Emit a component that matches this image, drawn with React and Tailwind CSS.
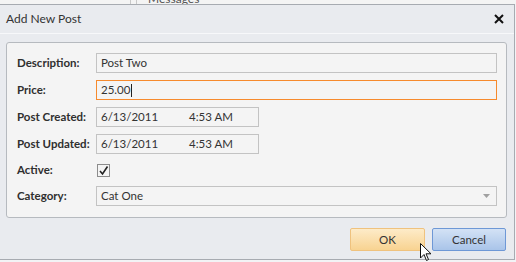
import React from "react";

const labelCls = "w-[79px] shrink-0 font-bold text-[11.5px] text-[#2f2f2f]";
const boxCls = "h-[20px] border border-[#c3c3c3] bg-[#f4f4f4] flex items-center px-[4px] text-[11.5px] text-[#333]";

function Row({ label, children, h = "h-[20px]" }) {
  return (
    <div className={`flex items-center ${h}`}>
      <div className={labelCls}>{label}</div>
      <div className="flex-1 flex items-center">{children}</div>
    </div>
  );
}

function DateBox() {
  return (
    <div className={`${boxCls} w-[163px]`}>
      <span className="w-[88px]">6/13/2011</span>
      <span>4:53 AM</span>
    </div>
  );
}

export default function App() {
  return (
    <div
      className="w-[516px] h-[262px] bg-[#f2f3f5] overflow-hidden relative"
      style={{ fontFamily: "Lato, 'Open Sans', sans-serif" }}
    >
      {/* strip of the page behind the dialog */}
      <div className="h-[4px] overflow-hidden flex bg-[#f4f4f4]">
        <div className="w-[130px]" />
        <div className="w-[7px] border-x border-[#c9c9c9]" />
        <div className="pl-[11px] -mt-[10px] text-[12px] text-[#555]">Messages</div>
      </div>

      <div className="w-[515px] h-[256px] border-y border-r border-[#a7abb1] bg-[#e9ebef] flex flex-col">
        {/* header */}
        <div className="h-[29px] flex items-center justify-between pl-[6px] pr-[10px] border-b border-[#f7f8fa]">
          <span className="text-[12px] text-[#333]">Add New Post</span>
          <svg width="10" height="10" viewBox="0 0 10 10">
            <path d="M1 1 L9 9 M9 1 L1 9" stroke="#111" strokeWidth="2" />
          </svg>
        </div>

        {/* form panel */}
        <div className="pl-[6px] pr-[7px] pt-[8px]">
          <div className="h-[176px] border border-[#b6babf] rounded-[3px] bg-[#f4f4f4] pl-[10px] pr-[9px] pt-[10px] flex flex-col gap-[7px]">
            <Row label="Description:">
              <div className={`${boxCls} w-full`}>Post Two</div>
            </Row>
            <Row label="Price:">
              <div className={`${boxCls} w-full border-[#f68a2d]`}>
                25.00<span className="w-px h-[13px] bg-[#222] ml-px" />
              </div>
            </Row>
            <Row label="Post Created:">
              <DateBox />
            </Row>
            <Row label="Post Updated:">
              <DateBox />
            </Row>
            <Row label="Active:" h="h-[18px]">
              <div className="ml-[1px] w-[13px] h-[13px] border border-[#8c8c8c] bg-[#f4f4f4] flex items-center justify-center">
                <svg width="11" height="11" viewBox="0 0 11 11">
                  <path d="M2 6 L4.5 9 L9.5 1.5" stroke="#222" strokeWidth="1.6" fill="none" />
                </svg>
              </div>
            </Row>
            <Row label="Category:">
              <div className={`${boxCls} w-full justify-between text-[#3a3a4a]`}>
                <span>Cat One</span>
                <svg width="7" height="4" viewBox="0 0 7 4" className="mr-[2px]">
                  <path d="M0 0 H7 L3.5 4 Z" fill="#a0a0a0" />
                </svg>
              </div>
            </Row>
          </div>
        </div>

        {/* buttons */}
        <div className="flex justify-end gap-[7px] pr-[8px] pt-[10px]">
          <button className="w-[75px] h-[23px] rounded-[2px] border border-[#efc27e] bg-gradient-to-b from-[#fdebc8] to-[#f8d391] text-[11.5px] text-[#333]">
            OK
          </button>
          <button className="w-[74px] h-[23px] rounded-[2px] border border-[#6e98d6] bg-gradient-to-b from-[#d3e2f5] to-[#a9c4e9] text-[11.5px] text-[#333]">
            Cancel
          </button>
        </div>
      </div>

      {/* mouse pointer */}
      <svg className="absolute left-[420px] top-[243px]" width="14" height="20" viewBox="0 0 14 20">
        <path d="M0.5 0.5 L0.5 15 L4 11.5 L6.5 17.5 L8.5 16.5 L6 10.8 L11 10.8 Z" fill="#fff" stroke="#111" strokeWidth="1" />
      </svg>
    </div>
  );
}
